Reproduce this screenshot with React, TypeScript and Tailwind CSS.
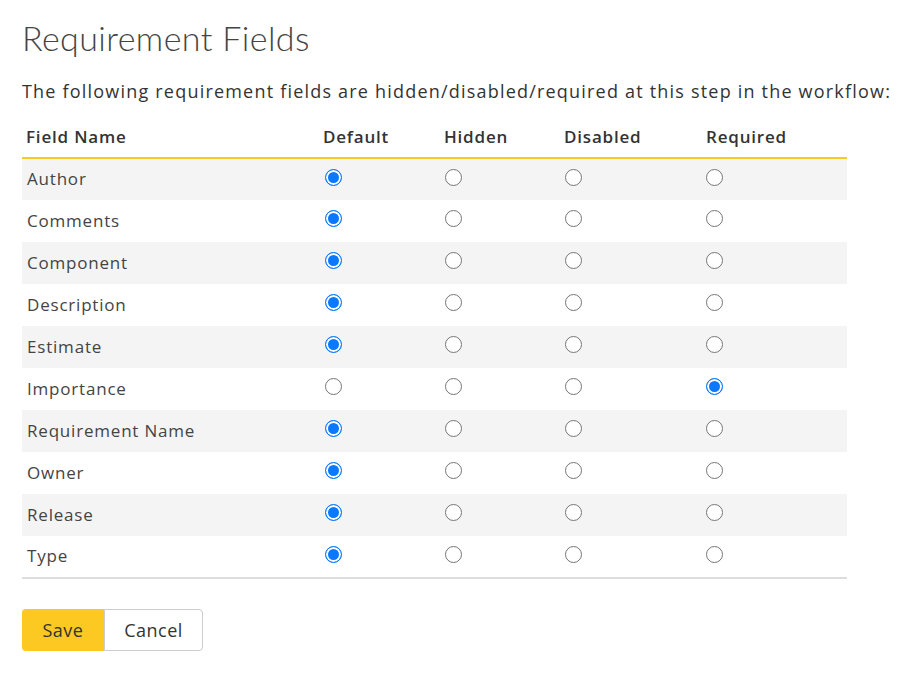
import React from 'react';

const fields: { name: string; value: string }[] = [
  { name: 'Author', value: 'default' },
  { name: 'Comments', value: 'default' },
  { name: 'Component', value: 'default' },
  { name: 'Description', value: 'default' },
  { name: 'Estimate', value: 'default' },
  { name: 'Importance', value: 'required' },
  { name: 'Requirement Name', value: 'default' },
  { name: 'Owner', value: 'default' },
  { name: 'Release', value: 'default' },
  { name: 'Type', value: 'default' },
];

const options = ['default', 'hidden', 'disabled', 'required'];

const App: React.FC = () => {
  return (
    <div className="bg-white min-h-screen pl-[22px] pt-[17px] text-[#333] font-['Open_Sans',sans-serif]">
      <h1 className="text-[34px] leading-[42px] font-light tracking-[0.4px] text-[#444] font-['Lato',sans-serif]">
        Requirement Fields
      </h1>

      <p className="mt-[19px] text-[18px] leading-[26px] tracking-[1.2px] text-[#333] whitespace-nowrap">
        The following requirement fields are hidden/disabled/required at this step in the workflow:
      </p>

      <table className="mt-[15px] w-[825px] border-collapse text-[17px] tracking-[0.8px]">
        <thead>
          <tr className="border-b-2 border-[#fcc822] h-[39px] text-left">
            <th className="w-[298px] pl-[4px] pb-[2px] font-semibold">Field Name</th>
            <th className="w-[120px] pl-[3px] pb-[2px] font-semibold">Default</th>
            <th className="w-[120px] pl-[4px] pb-[2px] font-semibold">Hidden</th>
            <th className="w-[141px] pl-[4px] pb-[2px] font-semibold">Disabled</th>
            <th className="pl-[5px] pb-[2px] font-semibold">Required</th>
          </tr>
        </thead>
        <tbody>
          {fields.map((f, i) => (
            <tr
              key={f.name}
              className={`h-[42px] ${i % 2 === 0 ? 'bg-[#f4f4f4]' : 'bg-white'} ${
                i === fields.length - 1 ? 'border-b-2 border-[#dddddd]' : ''
              }`}
            >
              <td className="pl-[5px] text-[#444] pb-[1px]">{f.name}</td>
              {options.map((o) => (
                <td key={o} className="pl-[5px] pb-[5px] align-middle">
                  <input
                    type="radio"
                    name={f.name}
                    defaultChecked={f.value === o}
                    className="block appearance-none m-0 w-[17px] h-[17px] rounded-full border-[1.5px] border-[#767676] bg-white checked:border-[#0a78ff] checked:border-[1.5px] checked:bg-[#0a78ff] checked:shadow-[inset_0_0_0_2px_white]"
                  />
                </td>
              ))}
            </tr>
          ))}
        </tbody>
      </table>

      <div className="mt-[30px] flex">
        <button className="h-[42px] w-[82px] bg-[#fcc822] rounded-l-[4px] text-[18px] tracking-[0.5px] text-[#333]">
          Save
        </button>
        <button className="h-[42px] w-[99px] bg-white border border-[#cccccc] rounded-r-[4px] text-[18px] tracking-[0.5px] text-[#333]">
          Cancel
        </button>
      </div>
    </div>
  );
};

export default App;
